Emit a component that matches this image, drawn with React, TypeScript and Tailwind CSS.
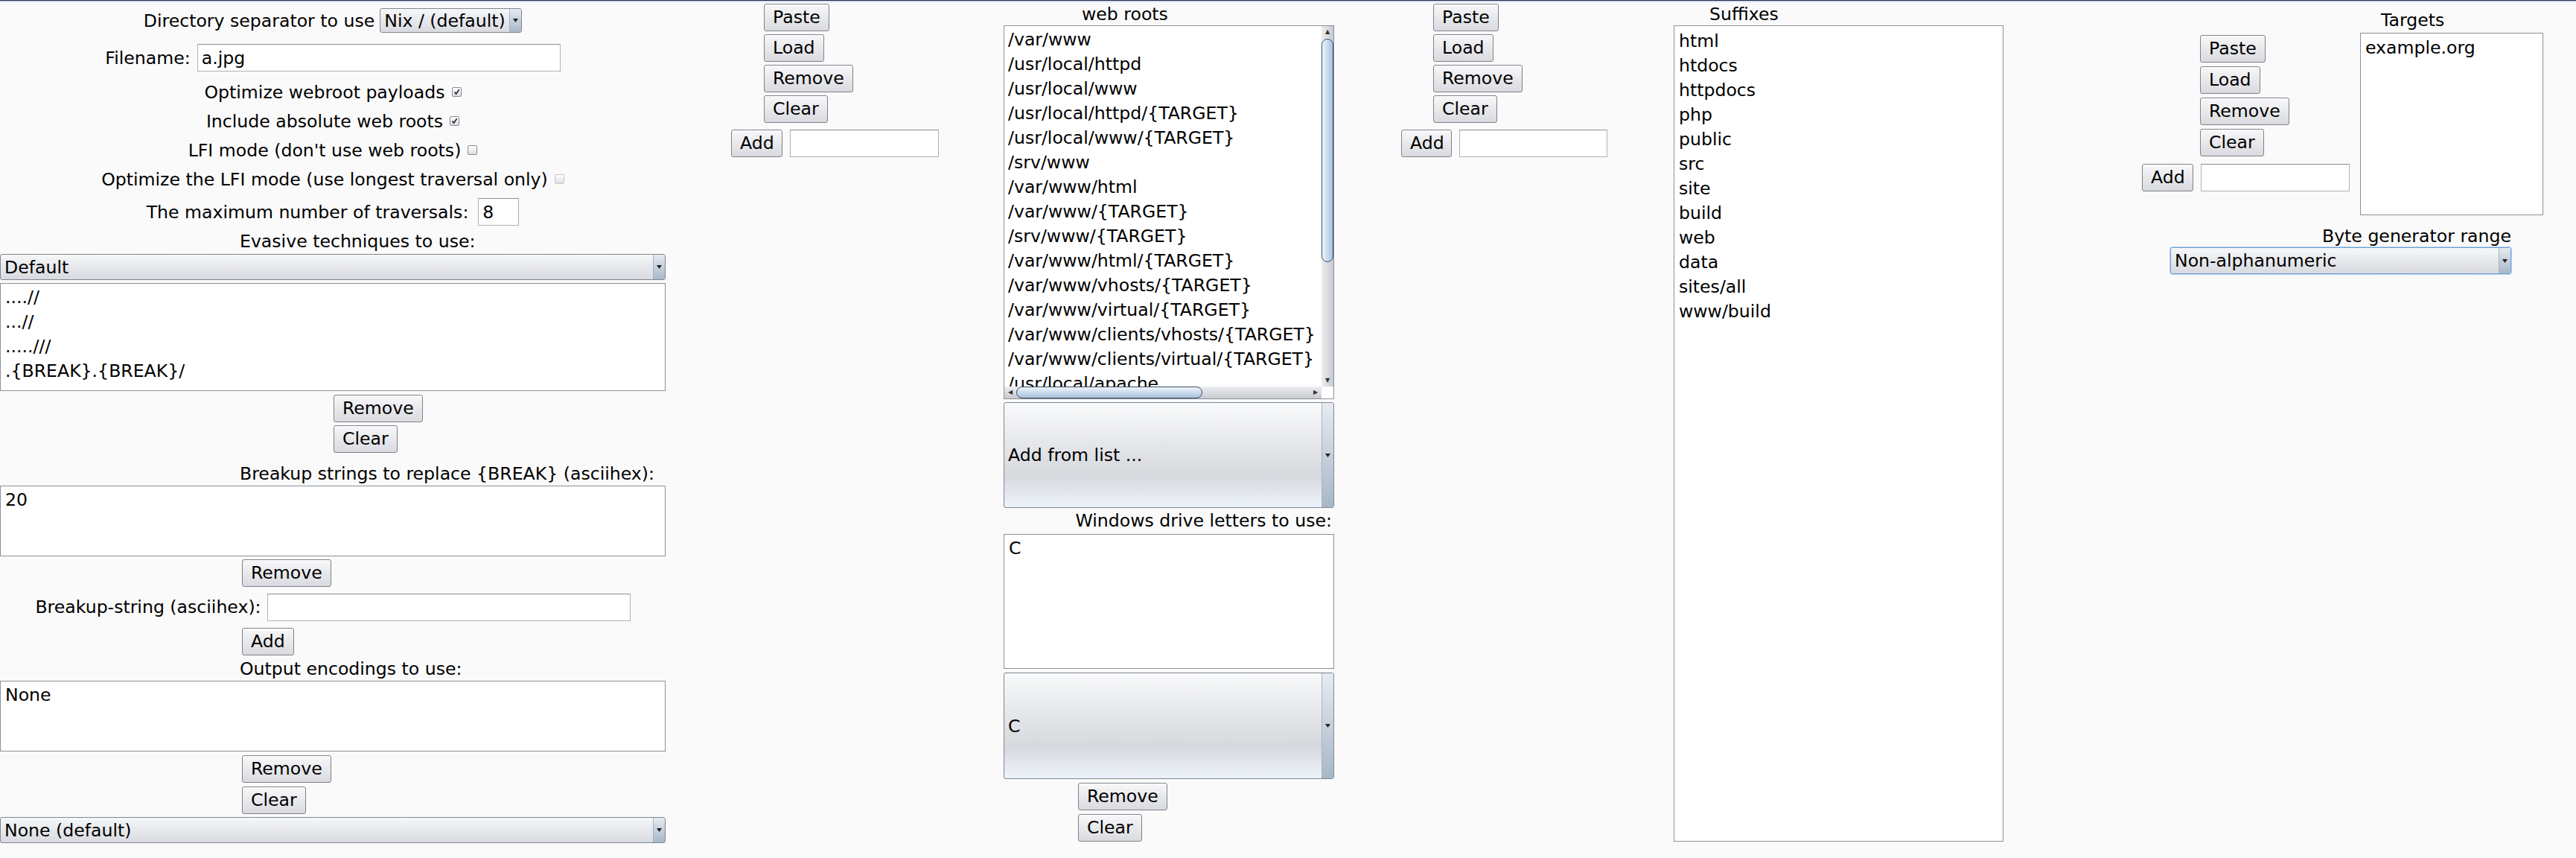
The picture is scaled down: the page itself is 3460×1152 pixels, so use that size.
import React from "react";

const font = "font-['DejaVu_Sans',_'Liberation_Sans',_sans-serif]";

function Btn({ label, className = "" }: { label: string; className?: string }) {
  return (
    <button
      className={`h-[37px] px-[11px] border border-[#7e828a] rounded-[3px]
      bg-linear-to-b from-[#f8f8fa] to-[#d9dadf] text-black leading-none
      shadow-[inset_0_1px_0_#ffffff] self-start shrink-0 ${className}`}
    >
      {label}
    </button>
  );
}

function Arrow() {
  return (
    <svg width="7" height="5" viewBox="0 0 7 5">
      <path d="M0 0 L7 0 L3.5 5 Z" fill="#222" />
    </svg>
  );
}

// combo box with the narrow arrow strip on the right
function Select({
  text,
  className = "",
  tall = false,
  focus = false,
}: {
  text: string;
  className?: string;
  tall?: boolean;
  focus?: boolean;
}) {
  return (
    <div
      className={`flex shrink-0 border rounded-[3px] overflow-hidden
      ${focus ? "border-[#6f9fd3] shadow-[0_0_0_1px_#b9d3ef]" : "border-[#80868f]"}
      ${tall
        ? "bg-[linear-gradient(180deg,#f9fafb_0%,#e4e6ea_40%,#d6d8dd_70%,#eef3fb_100%)]"
        : "bg-linear-to-b from-[#f6f7f9] to-[#d8dae0]"} ${className}`}
    >
      <div className="flex-1 flex items-center pl-[5px] whitespace-nowrap text-black">
        {text}
      </div>
      <div
        className="w-[16px] border-l border-[#a8b3c0] flex items-center justify-center
        bg-linear-to-b from-[#e6ebf1] to-[#a7b7c8]"
      >
        <Arrow />
      </div>
    </div>
  );
}

function ListBox({
  items,
  className = "",
}: {
  items: string[];
  className?: string;
}) {
  return (
    <div className={`border border-[#8c9098] bg-white overflow-hidden pt-[1px] shrink-0 ${className}`}>
      {items.map((it) => (
        <div key={it} className="h-[33px] flex items-center pl-[6px] whitespace-nowrap">
          {it}
        </div>
      ))}
    </div>
  );
}

function Field({ className = "", value = "" }: { className?: string; value?: string }) {
  return (
    <div
      className={`h-[37px] border border-[#b2b2b2] border-t-[#8e8e8e] bg-white
      flex items-center pl-[5px] shrink-0 ${className}`}
    >
      {value}
    </div>
  );
}

function Check({ on, disabled = false }: { on: boolean; disabled?: boolean }) {
  return (
    <span
      className={`w-[13px] h-[13px] rounded-[2px] border flex items-center justify-center
      bg-linear-to-b from-white to-[#dcdee3]
      ${disabled ? "border-[#c4c6ca]" : "border-[#878b93]"}`}
    >
      {on && (
        <svg width="9" height="9" viewBox="0 0 9 9">
          <path d="M1.5 4.5 L3.6 7.2 L7.6 1.3" stroke="#202020" strokeWidth="1.6" fill="none" />
        </svg>
      )}
    </span>
  );
}

function CheckRow({ label, on, disabled }: { label: string; on: boolean; disabled?: boolean }) {
  return (
    <div className="h-[39px] flex items-center justify-center gap-[9px]">
      <span>{label}</span>
      <Check on={on} disabled={disabled} />
    </div>
  );
}

// Paste / Load / Remove / Clear + Add row
function ListTools({
  offset,
  addW,
  inputW,
  compact = false,
}: {
  offset: string;
  addW: string;
  inputW: string;
  compact?: boolean;
}) {
  const h = compact ? "h-[36px]" : "";
  const gap = compact ? "mt-[5px]" : "mt-[4px]";
  return (
    <div className="flex flex-col">
      <Btn label="Paste" className={`${offset} ${h}`} />
      <Btn label="Load" className={`${offset} ${gap} ${h}`} />
      <Btn label="Remove" className={`${offset} ${gap} ${h}`} />
      <Btn label="Clear" className={`${offset} ${gap} ${h}`} />
      <div className={`flex gap-[10px] ${compact ? "mt-[10px]" : "mt-[9px]"}`}>
        <Btn label="Add" className={`${addW} ${h}`} />
        <Field className={`${inputW} ${h}`} />
      </div>
    </div>
  );
}

const webRoots = [
  "/var/www",
  "/usr/local/httpd",
  "/usr/local/www",
  "/usr/local/httpd/{TARGET}",
  "/usr/local/www/{TARGET}",
  "/srv/www",
  "/var/www/html",
  "/var/www/{TARGET}",
  "/srv/www/{TARGET}",
  "/var/www/html/{TARGET}",
  "/var/www/vhosts/{TARGET}",
  "/var/www/virtual/{TARGET}",
  "/var/www/clients/vhosts/{TARGET}",
  "/var/www/clients/virtual/{TARGET}",
  "/usr/local/apache",
];

const suffixes = [
  "html",
  "htdocs",
  "httpdocs",
  "php",
  "public",
  "src",
  "site",
  "build",
  "web",
  "data",
  "sites/all",
  "www/build",
];

function ScrollList() {
  return (
    <div className="h-[502px] border border-[#8c9098] bg-white flex flex-col shrink-0">
      <div className="flex flex-1 min-h-0">
        <div className="flex-1 overflow-hidden pt-[1px]">
          {webRoots.map((it) => (
            <div key={it} className="h-[33px] flex items-center pl-[5px] whitespace-nowrap">
              {it}
            </div>
          ))}
        </div>
        <div className="w-[16px] flex flex-col bg-linear-to-r from-[#eceef1] to-[#c8cad0]">
          <div className="h-[16px] flex items-center justify-center text-[8px] text-[#333]">▲</div>
          <div
            className="mt-[1px] h-[300px] rounded-[8px] border border-[#3c4c66]
            bg-linear-to-r from-[#eef5fc] to-[#a6c2de]"
          />
          <div className="flex-1" />
          <div className="h-[16px] flex items-center justify-center text-[8px] text-[#333]">▼</div>
        </div>
      </div>
      <div className="h-[16px] flex">
        <div className="flex-1 flex bg-linear-to-b from-[#eceef1] to-[#c8cad0]">
          <div className="w-[16px] flex items-center justify-center text-[8px] text-[#333]">◀</div>
          <div
            className="w-[250px] rounded-[8px] border border-[#3c4c66]
            bg-linear-to-b from-[#eef5fc] to-[#a6c2de]"
          />
          <div className="flex-1" />
          <div className="w-[16px] flex items-center justify-center text-[8px] text-[#333]">▶</div>
        </div>
        <div className="w-[16px] bg-white" />
      </div>
    </div>
  );
}

export default function App() {
  return (
    <div className={`w-[3460px] h-[1152px] bg-[#fafafa] text-black text-[23.6px] leading-[28px] overflow-hidden ${font}`}>

      {/* window edge */}
      <div className="h-[1px] bg-[#1e2740]" />
      <div className="h-[2px] bg-[#d3deef]" />

      <div className="flex items-start">

        {/* Column 1 : options */}
        <div className="w-[894px] flex flex-col shrink-0">

          <div className="mt-[8px] h-[33px] flex items-center justify-center gap-[7px]">
            <span>Directory separator to use</span>
            <Select text="Nix / (default)" className="w-[191px] h-[33px]" />
          </div>

          <div className="mt-[15px] h-[37px] flex items-center justify-center gap-[9px]">
            <span>Filename:</span>
            <Field value="a.jpg" className="w-[488px]" />
          </div>

          <div className="mt-[8px]">
            <CheckRow label="Optimize webroot payloads" on />
            <CheckRow label="Include absolute web roots" on />
            <CheckRow label="LFI mode (don't use web roots)" on={false} />
            <CheckRow label="Optimize the LFI mode (use longest traversal only)" on={false} disabled />
          </div>

          <div className="mt-[6px] h-[37px] flex items-center justify-center gap-[13px]">
            <span>The maximum number of traversals:</span>
            <Field value="8" className="w-[55px]" />
          </div>

          <div className="mt-[4px] h-[34px] flex items-center pl-[322px]">
            Evasive techniques to use:
          </div>

          <Select text="Default" className="h-[35px]" />

          <ListBox
            items={["....//", "...//", ".....///", ".{BREAK}.{BREAK}/"]}
            className="mt-[4px] h-[145px]"
          />

          <Btn label="Remove" className="mt-[5px] ml-[448px]" />
          <Btn label="Clear" className="mt-[4px] ml-[448px]" />

          <div className="mt-[14px] pl-[322px]">
            Breakup strings to replace {"{BREAK}"} (asciihex):
          </div>

          <ListBox items={["20"]} className="mt-[2px] h-[95px]" />

          <Btn label="Remove" className="mt-[4px] ml-[325px]" />

          <div className="mt-[9px] h-[36px] flex items-center justify-center gap-[8px]">
            <span>Breakup-string (asciihex):</span>
            <Field className="w-[488px] h-[36px]" />
          </div>

          <Btn label="Add" className="mt-[10px] ml-[325px] h-[36px]" />

          <div className="mt-[4px] pl-[322px]">Output encodings to use:</div>

          <ListBox items={["None"]} className="mt-[2px] h-[95px]" />

          <Btn label="Remove" className="mt-[5px] ml-[325px] h-[36px]" />
          <Btn label="Clear" className="mt-[5px] ml-[325px]" />

          <Select text="None (default)" className="mt-[4px] h-[35px]" />
        </div>

        {/* Column 2 : web root tools */}
        <div className="ml-[88px] w-[279px] mt-[2px] shrink-0">
          <ListTools offset="ml-[44px]" addW="w-[69px]" inputW="w-[200px]" />
        </div>

        {/* Column 3 : web roots */}
        <div className="ml-[87px] w-[444px] flex flex-col shrink-0">
          <div className="h-[31px] flex items-center pl-[105px]">web roots</div>
          <ScrollList />
          <Select text="Add from list ..." tall className="mt-[4px] h-[142px]" />
          <div className="mt-[3px] text-right pr-[3px]">Windows drive letters to use:</div>
          <ListBox items={["C"]} className="mt-[4px] h-[181px]" />
          <Select text="C" tall className="mt-[5px] h-[143px]" />
          <Btn label="Remove" className="mt-[5px] ml-[100px] h-[36px]" />
          <Btn label="Clear" className="mt-[5px] ml-[100px] h-[36px]" />
        </div>

        {/* Column 4 : suffix tools */}
        <div className="ml-[90px] w-[277px] mt-[2px] shrink-0">
          <ListTools offset="ml-[43px]" addW="w-[68px]" inputW="w-[199px]" />
        </div>

        {/* Column 5 : suffixes */}
        <div className="ml-[89px] w-[443px] flex flex-col shrink-0">
          <div className="h-[31px] flex items-center pl-[48px]">Suffixes</div>
          <ListBox items={suffixes} className="h-[1096px] pt-[3px]" />
        </div>

        {/* Column 6 : targets */}
        <div className="ml-[186px] w-[539px] flex flex-col shrink-0">
          <div className="flex items-start">
            <div className="w-[279px] mt-[44px]">
              <ListTools offset="ml-[78px]" addW="w-[69px]" inputW="w-[200px]" compact />
            </div>
            <div className="ml-[14px] w-[246px] flex flex-col">
              <div className="h-[41px] pt-[10px] pl-[28px]">Targets</div>
              <ListBox items={["example.org"]} className="h-[245px] pt-[2px]" />
            </div>
          </div>

          <div className="ml-[38px] w-[458px] flex flex-col mt-[14px]">
            <div className="text-right">Byte generator range</div>
            <Select text="Non-alphanumeric" focus className="mt-[1px] h-[36px]" />
          </div>
        </div>

      </div>
    </div>
  );
}
